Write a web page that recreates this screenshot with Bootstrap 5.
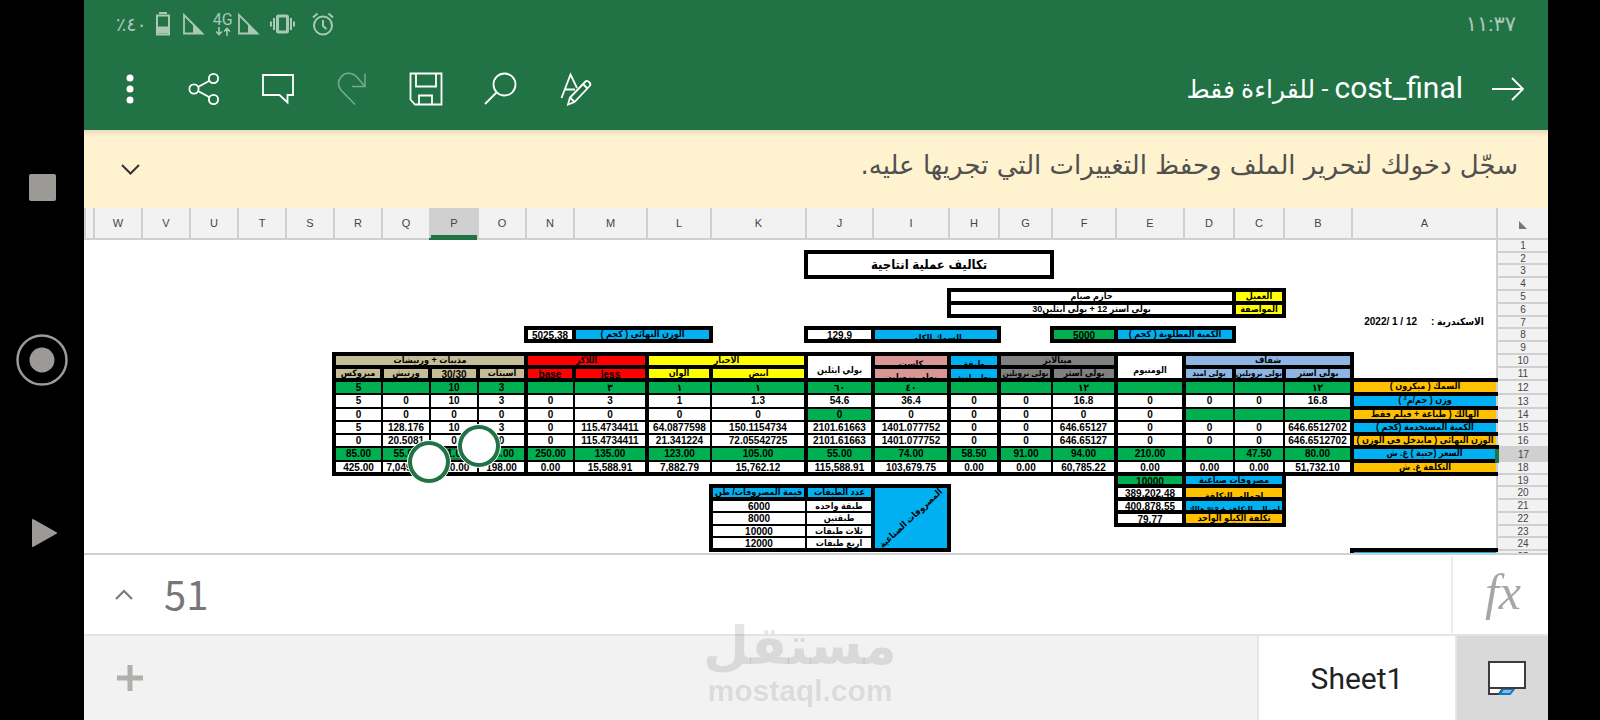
<!DOCTYPE html>
<html lang="ar">
<head>
<meta charset="utf-8">
<meta name="viewport" content="width=device-width, initial-scale=1">
<title>cost_final</title>
<link href="https://cdn.jsdelivr.net/npm/bootstrap@5.3.0/dist/css/bootstrap.min.css" rel="stylesheet">
<style>
  body { font-family: "Liberation Sans", "DejaVu Sans", sans-serif; background: #000; }
  button { border: 0; background: none; padding: 0; }
  svg { display: block; }
  .frame { height: 100vh; min-height: 480px; }
  .sysnav { width: 84px; gap: 121px; }
  .sysnav button { height: 52px; }
  .cutout { width: 52px; }
  .appbar { background: #217346; color: #fff; }
  .status { height: 48px; padding: 0 32px; color: #a9c8b6; font: 21px "Roboto", "DejaVu Sans", sans-serif; }
  .status-pct { font-size: 19px; }
  .net { font: 16px/14px "Roboto", sans-serif; }
  .tools { height: 82px; padding: 0 22px 0 9px; }
  .tools .tool { width: 74px; height: 64px; }
  .doc-nav { gap: 19px; }
  .doc-title { font: 30px/40px "Roboto", "DejaVu Sans", sans-serif; }
  .doc-title bdi + span { font-size: 25px; }
  .notice { height: 78px; padding: 0 30px 0 36px; background: #fff2cf; color: #505050; font: 26px "DejaVu Sans", sans-serif; box-shadow: inset 0 6px 4px -3px #e8dcbc; }
  .notice span { padding-bottom: 8px; }
  .sheet-area { min-height: 0; background: #fff; border-bottom: 2px solid #d0d0d0; }

  .gridsheet { table-layout: fixed; width: 100%; border-collapse: collapse; font: 700 10px/12px "Liberation Sans", "DejaVu Sans Condensed", "DejaVu Sans", sans-serif; color: #000; }
  .gridsheet td { padding: 0; vertical-align: top; text-align: center; white-space: nowrap; }
  .gridsheet td > div { height: 9px; }
  .gridsheet th { padding: 0; background: #f2f2f2; color: #444; font-weight: 400; text-align: center; vertical-align: middle; line-height: 9px; border: 2px solid #d0d0d0; border-top: 0; }
  .gridsheet tbody th { border-right: 0; }
  .gridsheet thead th { font-size: 11px; }
  .gridsheet thead th:first-child { border-right: 0; }
  .gridsheet tr { height: 13px; }
  .gridsheet tr.h12 { height: 12px; }
  .gridsheet tr.h14 { height: 14px; }
  .gridsheet tr.h12 td > div { height: 8px; }
  .gridsheet thead tr { height: 31px; }
  .gridsheet thead th.sel { background: #d0d0d0; box-shadow: inset 0 -3px #217346; border-bottom-color: #217346; }
  .gridsheet tbody th.sel { background: #d0d0d0; border-left: 4px solid #217346; }
  .gridsheet .body td { border: 2px solid #000; }
  .gridsheet .body td.out { border: 0; }
  .gridsheet td.bx, .gridsheet .body td.bx { border: 4px solid #000; }
  .gridsheet td.bx { font-size: 9px; line-height: 9px; }
  .gridsheet td.bx.num { font-size: 10px; line-height: 11px; }
  .gridsheet td.th2 { border: 2px solid #000; }
  .gridsheet td.th2.ar { font-size: 9px; line-height: 10px; }
  .gridsheet td.lf4 { border-left-width: 4px; }
  .gridsheet td.bt4 { border-bottom-width: 4px; }
  .gridsheet .body td.lf { border-left: 4px solid #000; }
  .gridsheet td.lab { border-right: 0 !important; }
  .gridsheet td.vb { vertical-align: bottom; }
  .gridsheet td.vb > div { height: 12px; }
  .gridsheet td.low > div { padding-top: 4px; overflow: hidden; }
  .gridsheet td.sm { font-size: 8px; }
  .gridsheet td.big { font-size: 13px; vertical-align: middle; }
  .gridsheet tr.h12 td.big > div { height: 20px; line-height: 20px; }
  .gridsheet td.diag { vertical-align: middle; }
  .gridsheet td.diag > div { height: 56px; display: flex; align-items: center; justify-content: center; }
  .diag span { transform: rotate(-43deg); }
  .c-gn { background: #00b050; } .c-bl { background: #00b0f0; } .c-or { background: #ffc000; }
  .c-ye { background: #ffff00; } .c-re { background: #ff0000; } .c-tn { background: #c4bd97; }
  .c-pk { background: #da9694; } .c-gy { background: #808080; } .c-lb { background: #8db4e2; }
  .active-cell { position: relative; box-shadow: inset 0 0 0 2px #217346; }
  .active-cell i { position: absolute; width: 44px; height: 44px; border-radius: 50%; background: #217346; border: 1px solid #fff; padding: 4px; z-index: 2; }
  .active-cell i::before { content: ""; display: block; width: 100%; height: 100%; border-radius: 50%; background: #fff; }
  .grip-a { top: -24px; right: -24px; }
  .grip-b { bottom: -24px; left: -24px; }

  .formula { height: 79px; background: #fff; }
  .fx { width: 97px; border-left: 2px solid #ececec; color: #a6a6a6; font: italic 50px/72px "Liberation Serif", serif; padding: 0 0 5px 5px; }
  .formula input { border: 0; outline: 0; color: #777; font: 40px/60px "Noto Sans CJK SC", sans-serif; min-width: 0; padding: 0 10px 4px; }
  .expand { width: 70px; padding-left: 10px; }
  .tabs { height: 86px; background: #f2f2f2; border-top: 2px solid #e4e4e4; }
  .tab-list { width: 91px; background: #d9d9d9; }
  .tab-sheet { width: 200px; background: #fff; border: solid #e6e6e6; border-width: 0 2px; color: #222; font: 30px "Roboto", sans-serif; }
  .add { width: 92px; }
  .wmark { position: absolute; left: 50%; bottom: 12px; transform: translateX(-50%); color: rgba(0,0,0,.1); text-align: center; font-weight: 700; font-size: 30px; line-height: 34px; pointer-events: none; }
  .wmark-ar { font: 700 53px/56px "DejaVu Sans", sans-serif; }
</style>
</head>
<body>
<div class="frame d-flex overflow-hidden position-relative">
  <nav class="sysnav d-flex flex-column align-items-center justify-content-center flex-shrink-0">
    <button aria-label="recent"><svg width="52" height="52"><rect x="13" y="13" width="27" height="27" rx="2" fill="#9c9a97"/></svg></button>
    <button aria-label="home"><svg width="52" height="52"><circle cx="26" cy="26" r="24.5" fill="none" stroke="#9c9a97" stroke-width="2.5"/><circle cx="26" cy="26" r="12.5" fill="#9c9a97"/></svg></button>
    <button aria-label="back"><svg width="52" height="52"><path d="M17 13l23 13-23 13z" fill="#9c9a97" stroke="#9c9a97" stroke-width="2" stroke-linejoin="round"/></svg></button>
  </nav>

  <main class="d-flex flex-column flex-grow-1 overflow-hidden" dir="rtl">
    <header class="appbar flex-shrink-0">
      <div class="status d-flex align-items-center justify-content-between">
        <span>١١:٣٧</span>
        <div class="d-flex align-items-center" dir="ltr">
          <span class="status-pct" dir="rtl">٤٠٪</span>
          <svg class="ms-2" width="16" height="24" fill="none" stroke="#a9c8b6" stroke-width="2"><path d="M2 3.500h12v19H2z"/><path d="M4 1h8" /><path d="M3 14.500h10v7H3z" fill="#a9c8b6" stroke="none"/></svg>
          <svg class="ms-2 me-2" width="26" height="24"><path d="M5 3v18.500h18.500z" fill="none" stroke="#a9c8b6" stroke-width="1.800"/><path d="M14 12l10 10H14z" fill="#a9c8b6"/></svg>
          <span class="d-flex flex-column align-items-center"><span class="net">4G</span><svg width="18" height="9" fill="none" stroke="#a9c8b6" stroke-width="1.600"><path d="M5 0v7M2 4.500l3 3 3-3M13 9V1.500M10 4.500l3-3 3 3"/></svg></span>
          <svg width="28" height="24"><path d="M6 3v18.500h18.500z" fill="none" stroke="#a9c8b6" stroke-width="1.800"/><path d="M15 12l10 10H15z" fill="#a9c8b6"/></svg>
          <svg class="ms-2" width="27" height="24" fill="none" stroke="#a9c8b6" stroke-width="2"><rect x="8.500" y="4" width="10" height="16" rx="1" stroke-width="3"/><path d="M5 6v12M2 9.500v5M22 6v12M25 9.500v5"/></svg>
          <svg class="ms-3" width="24" height="24" fill="none" stroke="#a9c8b6" stroke-width="2"><circle cx="11" cy="13.500" r="9"/><path d="M11 8v6l3.500 3M1 5.500l4.500-4M21 5.500l-4.500-4"/></svg>
        </div>
      </div>
      <div class="tools d-flex align-items-center justify-content-between">
        <div class="doc-nav d-flex align-items-center">
          <button aria-label="رجوع"><svg class="ms-2" width="36" height="26" fill="none" stroke="#fff" stroke-width="1.800"><path d="M2 13h31M22 2l11 11-11 11"/></svg></button>
          <h1 class="doc-title m-0"><bdi>cost_final</bdi><span> - للقراءة فقط</span></h1>
        </div>
        <div class="d-flex" dir="ltr">
          <button class="tool d-flex align-items-center justify-content-center" aria-label="المزيد"><svg width="8" height="32" fill="#fff"><circle cx="4" cy="5" r="3.500"/><circle cx="4" cy="16" r="3.500"/><circle cx="4" cy="27" r="3.500"/></svg></button>
          <button class="tool d-flex align-items-center justify-content-center" aria-label="مشاركة"><svg width="32" height="32" fill="none" stroke="#fff" stroke-width="1.800"><circle cx="6" cy="16" r="4.600"/><circle cx="25.500" cy="5.500" r="4.600"/><circle cx="25.500" cy="26.500" r="4.600"/><path d="M10 14l11.500-6.300M10 18l11.500 6.300"/></svg></button>
          <button class="tool d-flex align-items-center justify-content-center" aria-label="تعليق"><svg width="34" height="32" fill="none" stroke="#fff" stroke-width="1.800"><path d="M2 2h30v20h-5.500v7.500l-8-7.500H2z"/></svg></button>
          <button class="tool d-flex align-items-center justify-content-center" aria-label="إعادة" disabled><svg width="30" height="34" fill="none" stroke="#7aab8f" stroke-width="1.500"><path d="M28 1.500v13H15M28 14.500L19 4C14-.5 7 1 4 5c-3.500 4-3 9 0 13l14 14.500"/></svg></button>
          <button class="tool d-flex align-items-center justify-content-center" aria-label="حفظ"><svg width="34" height="34" fill="none" stroke="#fff" stroke-width="1.800"><path d="M1.500 1.500h31v31H6l-4.500-5zM7 1.500v13h20v-13M10 32.500v-9h13v9"/></svg></button>
          <button class="tool d-flex align-items-center justify-content-center" aria-label="بحث"><svg width="34" height="34" fill="none" stroke="#fff" stroke-width="1.800"><circle cx="21.500" cy="12.500" r="11"/><path d="M13.500 20.500L2 32"/></svg></button>
          <button class="tool d-flex align-items-center justify-content-center ps-1" aria-label="تنسيق"><svg width="34" height="36" fill="none" stroke="#fff" stroke-width="1.800"><path d="M2.500 27L11.500 3.500 18 17M6 18.500h10"/><path d="M9 33.500l2-7L26.500 10.500c2-2 6.500 2 4.200 4.500L15.500 31zM11 26.500l4.500 4.500M24 13l4.500 4.500"/></svg></button>
        </div>
      </div>
    </header>

    <section class="notice d-flex align-items-center justify-content-between flex-shrink-0">
      <span>سجّل دخولك لتحرير الملف وحفظ التغييرات التي تجريها عليه.</span>
      <button aria-label="توسيع"><svg width="21" height="13" fill="none" stroke="#333" stroke-width="2"><path d="M2 2l8.500 8.500L19 2"/></svg></button>
    </section>

    <section class="sheet-area flex-grow-1 overflow-hidden">
      <table class="gridsheet">
        <colgroup>
          <col style="width:51px"><col style="width:145px"><col style="width:68px"><col style="width:50px"><col style="width:50px"><col style="width:68px"><col style="width:64px"><col style="width:53px"><col style="width:50px"><col style="width:76px"><col style="width:67px"><col style="width:95px"><col style="width:64px"><col style="width:73px"><col style="width:48px"><col style="width:48px"><col style="width:48px"><col style="width:48px"><col style="width:48px"><col style="width:48px"><col style="width:48px"><col style="width:48px"><col style="width:48px"><col style="width:48px"><col>
        </colgroup>
        <thead>
          <tr><th><svg class="mx-auto mt-1" width="8" height="8"><path d="M0 0v8h8z" fill="#777"/></svg></th><th>A</th><th>B</th><th>C</th><th>D</th><th>E</th><th>F</th><th>G</th><th>H</th><th>I</th><th>J</th><th>K</th><th>L</th><th>M</th><th>N</th><th>O</th><th class="sel">P</th><th>Q</th><th>R</th><th>S</th><th>T</th><th>U</th><th>V</th><th>W</th><th></th></tr>
        </thead>
        <tbody>
          <tr><th>1</th><td colspan="24"></td></tr>
          <tr class="h12"><th>2</th><td colspan="6"></td><td class="bx big" colspan="4" rowspan="2"><div>تكاليف عملية انتاجية</div></td><td colspan="14"></td></tr>
          <tr><th>3</th><td colspan="6"></td><td colspan="14"></td></tr>
          <tr><th>4</th><td colspan="24"></td></tr>
          <tr><th>5</th><td colspan="2"></td><td class="bx c-ye"><div>العميل</div></td><td class="bx" colspan="5"><div>حازم صيام</div></td><td colspan="16"></td></tr>
          <tr><th>6</th><td colspan="2"></td><td class="bx c-ye"><div>المواصفة</div></td><td class="bx" colspan="5"><div>بولى استر 12 + بولى ايثلين30</div></td><td colspan="16"></td></tr>
          <tr class="h12"><th>7</th><td><div>الاسكندرية : &nbsp; &nbsp; <bdi dir="ltr">2022/ 1 / 12</bdi></div></td><td colspan="23"></td></tr>
          <tr><th>8</th><td colspan="3"></td><td class="bx c-bl" colspan="2"><div>الكمية المطلوبة ( كجم )</div></td><td class="bx num c-gn"><div>5000</div></td><td></td><td class="bx c-bl low" colspan="2"><div>السمك الكلى</div></td><td class="bx num"><div>129.9</div></td><td></td><td class="bx c-bl" colspan="2"><div>الوزن النهائى ( كجم )</div></td><td class="bx num"><div>5025.38</div></td><td colspan="10"></td></tr>
          <tr><th>9</th><td colspan="24"></td></tr>
        </tbody>
        <tbody class="body">
          <tr><th>10</th><td class="out"></td><td class="bx c-lb" colspan="3"><div>شفاف</div></td><td class="bx vb" rowspan="2"><div>الومنيوم</div></td><td class="bx c-gy" colspan="2"><div>ميتالايز</div></td><td class="bx c-bl low"><div>طبقة</div></td><td class="bx c-pk low"><div>كاست</div></td><td class="bx vb" rowspan="2"><div>بولي ايثلين</div></td><td class="bx c-ye" colspan="2"><div>الأحبار</div></td><td class="bx c-re" colspan="2"><div>اللاكر</div></td><td class="bx c-tn" colspan="4"><div>مذيبات + ورنيشات</div></td><td class="out" colspan="6"></td></tr>
          <tr><th>11</th><td class="out"></td><td class="bx c-lb"><div>بولى استر</div></td><td class="bx c-lb sm"><div>بولى بروبلين</div></td><td class="bx c-lb sm"><div>بولى اميد</div></td><td class="bx c-gy"><div>بولى استر</div></td><td class="bx c-gy sm"><div>بولى بروبلين</div></td><td class="bx c-bl low sm"><div>بولى اميد</div></td><td class="bx c-pk low"><div>بولى بروبلين</div></td><td class="bx c-ye"><div>ابيض</div></td><td class="bx c-ye"><div>الوان</div></td><td class="bx num c-re"><div>less</div></td><td class="bx num c-re"><div>base</div></td><td class="bx c-tn"><div>اسيتات</div></td><td class="bx num c-tn"><div>30/30</div></td><td class="bx c-tn"><div>ورنيش</div></td><td class="bx c-tn"><div>ميزوكس</div></td><td class="out" colspan="6"></td></tr>
          <tr class="h14"><th>12</th><td class="bx lab c-or"><div>السمك ( ميكرون )</div></td><td class="c-gn"><div>١٢</div></td><td class="c-gn"></td><td class="c-gn lf"></td><td class="c-gn lf"></td><td class="c-gn"><div>١٢</div></td><td class="c-gn lf"></td><td class="c-gn lf"></td><td class="c-gn lf"><div>٤٠</div></td><td class="c-gn lf"><div>٦٠</div></td><td class="c-gn"><div>١</div></td><td class="c-gn lf"><div>١</div></td><td class="c-gn"><div>٣</div></td><td class="c-gn lf"></td><td class="c-gn"><div>3</div></td><td class="c-gn"><div>10</div></td><td class="c-gn"></td><td class="c-gn lf"><div>5</div></td><td class="out" colspan="6"></td></tr>
          <tr class="h14"><th>13</th><td class="bx lab c-bl"><div>وزن ( جم/م² )</div></td><td><div>16.8</div></td><td><div>0</div></td><td class="lf"><div>0</div></td><td class="lf"><div>0</div></td><td><div>16.8</div></td><td class="lf"><div>0</div></td><td class="lf"><div>0</div></td><td class="lf"><div>36.4</div></td><td class="lf"><div>54.6</div></td><td><div>1.3</div></td><td class="lf"><div>1</div></td><td><div>3</div></td><td class="lf"><div>0</div></td><td><div>3</div></td><td><div>10</div></td><td><div>0</div></td><td class="lf"><div>5</div></td><td class="out" colspan="6"></td></tr>
          <tr><th>14</th><td class="bx lab c-or"><div>الهالك ( طباعة + فيلم فقط</div></td><td class="c-gn"></td><td class="c-gn"></td><td class="c-gn lf"></td><td class="lf"><div>0</div></td><td><div>0</div></td><td class="lf"><div>0</div></td><td class="lf"><div>0</div></td><td class="lf"><div>0</div></td><td class="c-gn lf"><div>0</div></td><td><div>0</div></td><td class="lf"><div>0</div></td><td><div>0</div></td><td class="lf"><div>0</div></td><td><div>0</div></td><td><div>0</div></td><td><div>0</div></td><td class="lf"><div>0</div></td><td class="out" colspan="6"></td></tr>
          <tr><th>15</th><td class="bx lab c-bl"><div>الكمية المستخدمة (كجم )</div></td><td><div>646.6512702</div></td><td><div>0</div></td><td class="lf"><div>0</div></td><td class="lf"><div>0</div></td><td><div>646.65127</div></td><td class="lf"><div>0</div></td><td class="lf"><div>0</div></td><td class="lf"><div>1401.077752</div></td><td class="lf"><div>2101.61663</div></td><td><div>150.1154734</div></td><td class="lf"><div>64.0877598</div></td><td><div>115.4734411</div></td><td class="lf"><div>0</div></td><td><div>3</div></td><td><div>10</div></td><td><div>128.176</div></td><td class="lf"><div>5</div></td><td class="out" colspan="6"></td></tr>
          <tr><th>16</th><td class="bx lab c-or"><div>الوزن النهائى ( مايدخل فى الوزن )</div></td><td><div>646.6512702</div></td><td><div>0</div></td><td class="lf"><div>0</div></td><td class="lf"><div>0</div></td><td><div>646.65127</div></td><td class="lf"><div>0</div></td><td class="lf"><div>0</div></td><td class="lf"><div>1401.077752</div></td><td class="lf"><div>2101.61663</div></td><td><div>72.05542725</div></td><td class="lf"><div>21.341224</div></td><td><div>115.4734411</div></td><td class="lf"><div>0</div></td><td><div>0</div></td><td><div>0</div></td><td><div>20.5081</div></td><td class="lf"><div>0</div></td><td class="out" colspan="6"></td></tr>
          <tr class="h14"><th class="sel">17</th><td class="bx lab c-bl"><div>السعر (جنية ) غ. ش</div></td><td class="c-gn"><div>80.00</div></td><td class="c-gn"><div>47.50</div></td><td class="c-gn lf"></td><td class="c-gn lf"><div>210.00</div></td><td class="c-gn"><div>94.00</div></td><td class="c-gn lf"><div>91.00</div></td><td class="c-gn lf"><div>58.50</div></td><td class="c-gn lf"><div>74.00</div></td><td class="c-gn lf"><div>55.00</div></td><td class="c-gn"><div>105.00</div></td><td class="c-gn lf"><div>123.00</div></td><td class="c-gn"><div>135.00</div></td><td class="c-gn lf"><div>250.00</div></td><td class="c-gn"><div>66.00</div></td><td class="c-gn active-cell"><div>51.00</div><i class="grip-a"></i><i class="grip-b"></i></td><td class="c-gn"><div>55.00</div></td><td class="c-gn lf"><div>85.00</div></td><td class="out" colspan="6"></td></tr>
          <tr class="cost"><th>18</th><td class="bx lab c-or"><div>التكلفة غ. ش</div></td><td class="bt4"><div>51,732.10</div></td><td class="bt4"><div>0.00</div></td><td class="lf bt4"><div>0.00</div></td><td class="lf bt4"><div>0.00</div></td><td class="bt4"><div>60,785.22</div></td><td class="lf bt4"><div>0.00</div></td><td class="lf bt4"><div>0.00</div></td><td class="lf bt4"><div>103,679.75</div></td><td class="lf bt4"><div>115,588.91</div></td><td class="bt4"><div>15,762.12</div></td><td class="lf bt4"><div>7,882.79</div></td><td class="bt4"><div>15,588.91</div></td><td class="lf bt4"><div>0.00</div></td><td class="bt4"><div>198.00</div></td><td class="bt4"><div>510.00</div></td><td class="bt4"><div>7,049.68</div></td><td class="lf bt4"><div>425.00</div></td><td class="out" colspan="6"></td></tr>
        </tbody>
        <tbody>
          <tr class="h12"><th>19</th><td colspan="2"></td><td class="bx c-bl" colspan="2"><div>مصروفات صناعية</div></td><td class="bx num c-gn"><div>10000</div></td><td colspan="19"></td></tr>
          <tr><th>20</th><td colspan="2"></td><td class="bx c-or low" colspan="2"><div>اجمالى التكلفة</div></td><td class="bx num"><div>389,202.48</div></td><td colspan="3"></td><td class="bx c-bl diag" rowspan="5"><div><span>المصروفات الصناعية</span></div></td><td class="bx c-bl"><div>عدد الطبقات</div></td><td class="bx c-bl"><div>قيمة المصروفات/ طن</div></td><td colspan="13"></td></tr>
          <tr><th>21</th><td colspan="2"></td><td class="bx c-bl low sm" colspan="2"><div>اجمالى التكلفة + 3% هالك</div></td><td class="bx num"><div>400,878.55</div></td><td colspan="3"></td><td class="th2 ar"><div>طبقة واحده</div></td><td class="th2 lf4"><div>6000</div></td><td colspan="13"></td></tr>
          <tr><th>22</th><td colspan="2"></td><td class="bx c-or" colspan="2"><div>تكلفة الكيلو الواحد</div></td><td class="bx num"><div>79.77</div></td><td colspan="3"></td><td class="th2 ar"><div>طبقتين</div></td><td class="th2 lf4"><div>8000</div></td><td colspan="13"></td></tr>
          <tr class="h12"><th>23</th><td colspan="8"></td><td class="th2 ar"><div>ثلاث طبقات</div></td><td class="th2 lf4"><div>10000</div></td><td colspan="13"></td></tr>
          <tr><th>24</th><td colspan="8"></td><td class="th2 ar bt4"><div>اربع طبقات</div></td><td class="th2 lf4 bt4"><div>12000</div></td><td colspan="13"></td></tr>
          <tr><th>25</th><td class="bx lab c-bl"></td><td colspan="23"></td></tr>
        </tbody>
      </table>
    </section>

    <section class="formula d-flex align-items-center flex-shrink-0">
      <label class="fx text-center" for="fxin">fx</label>
      <input id="fxin" class="flex-grow-1" dir="ltr" value="51">
      <button class="expand d-flex justify-content-center" aria-label="توسيع الشريط"><svg width="20" height="13" fill="none" stroke="#777" stroke-width="2"><path d="M2 11l8-8 8 8"/></svg></button>
    </section>
    <footer class="tabs d-flex flex-shrink-0">
      <button class="tab-list d-flex align-items-center justify-content-center" aria-label="الأوراق"><svg class="ms-2" width="40" height="36"><path d="M2 28h14l-4 6H2z" fill="#fff" stroke="#3c3c3c" stroke-width="2"/><path d="M16 29h11l-4 5H13z" fill="#8db4e2" stroke="#0a7bc4" stroke-width="2"/><rect x="2" y="2" width="36" height="26" fill="#fff" stroke="#3c3c3c" stroke-width="2"/></svg></button>
      <button class="tab-sheet">Sheet1</button>
      <button class="add me-auto d-flex align-items-center justify-content-center" aria-label="إضافة ورقة"><svg width="26" height="26"><path d="M13 0v26M0 13h26" stroke="#adb0ab" stroke-width="5"/></svg></button>
    </footer>
  </main>
  <div class="cutout flex-shrink-0"></div>
  <div class="wmark"><div class="wmark-ar" dir="rtl">مستقل</div>mostaql.com</div>
</div>
<script src="https://cdn.jsdelivr.net/npm/bootstrap@5.3.0/dist/js/bootstrap.bundle.min.js"></script>
</body>
</html>
